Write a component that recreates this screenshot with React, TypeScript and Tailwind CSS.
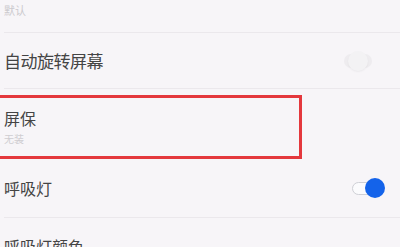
import React from 'react';

function Toggle({ on }: { on: boolean }) {
  if (on) {
    return (
      <div className="relative w-[33px] h-[20px] flex items-center">
        <div className="w-[30px] h-[13px] rounded-full border-[1.5px] border-[#cfd0d6] bg-[#fbfbfd]" />
        <div className="absolute right-0 top-0 w-[20px] h-[20px] rounded-full bg-[#1463ea]" />
      </div>
    );
  }
  return (
    <div className="relative w-[28px] h-[20px] flex items-center">
      <div className="w-[28px] h-[14px] rounded-full bg-[#eeecef]" />
      <div className="absolute left-[4px] top-0 w-[20px] h-[20px] rounded-full bg-[#f3f2f4] shadow-[0_1px_2px_rgba(0,0,0,0.05)]" />
    </div>
  );
}

export default function App() {
  const font = { fontFamily: '"Noto Sans CJK SC", "Noto Sans", sans-serif' };
  return (
    <div className="w-[400px] h-[247px] overflow-hidden bg-[#f7f5f8] relative" style={font}>
      {/* previous item tail */}
      <div className="h-[33px] ml-[4px] border-b border-[#ebe8ec] pt-[3px]">
        <div className="text-[11px] leading-[14px] text-[#cbc9cd]">默认</div>
      </div>

      {/* 自动旋转屏幕 */}
      <div className="h-[56px] ml-[4px] border-b border-[#ebe8ec] flex items-center justify-between pr-[28px]">
        <span className="text-[17px] text-[#444] tracking-[-0.5px]">自动旋转屏幕</span>
        <Toggle on={false} />
      </div>

      {/* 屏保 */}
      <div className="h-[70px] ml-[4px] relative flex flex-col pt-[19px]">
        <span className="text-[16px] leading-[20px] text-[#444]">屏保</span>
        <span className="text-[10px] leading-[14px] text-[#cfcdd1] mt-[4px]">无装</span>
        <div className="absolute -left-[8px] top-[6px] w-[306px] h-[64px] border-[3px] border-[#e4383d]" />
      </div>

      {/* 呼吸灯 */}
      <div className="h-[59px] ml-[4px] border-b border-[#ebe8ec] flex items-center justify-between pr-[15px]">
        <span className="text-[16px] text-[#444]">呼吸灯</span>
        <Toggle on={true} />
      </div>

      {/* 呼吸灯颜色 */}
      <div className="ml-[4px] pt-[16px]">
        <span className="text-[16px] leading-[20px] text-[#444]">呼吸灯颜色</span>
      </div>
    </div>
  );
}
